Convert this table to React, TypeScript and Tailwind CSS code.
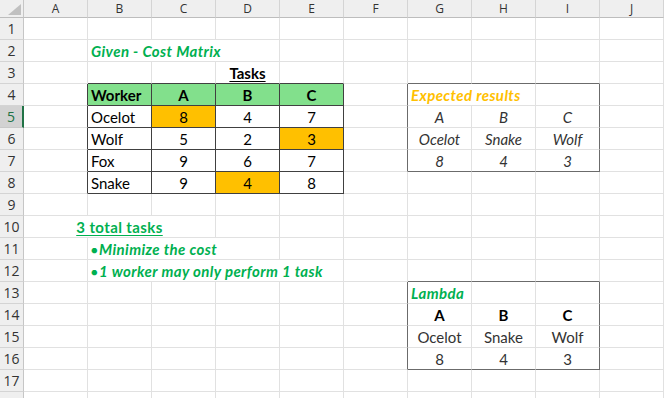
import React from "react";

type K = "g" | "t" | "x";
const W: Record<number, string> = { 1: "w-[64px]", 2: "w-[128px]", 3: "w-[192px]", 4: "w-[256px]" };
const R: Record<K, string> = { g: "border-r-[#e1e1e1]", t: "border-r-[#404040]", x: "border-r-[#6b6b6b]" };
const B: Record<K, string> = { g: "border-b-[#e1e1e1]", t: "border-b-[#404040]", x: "border-b-[#6b6b6b]" };

function Cell({
  w = 1,
  r = "g",
  b = "g",
  cls = "",
  children,
}: {
  w?: number;
  r?: K;
  b?: K;
  cls?: string;
  children?: React.ReactNode;
}) {
  return (
    <div
      className={`${W[w]} h-[22px] shrink-0 border-r border-b ${R[r]} ${B[b]} leading-[22px] whitespace-nowrap text-[15px] ${cls}`}
    >
      {children}
    </div>
  );
}

function RowHead({ n, sel = false, hide = false }: { n: number; sel?: boolean; hide?: boolean }) {
  return (
    <div
      className={`w-[24px] h-[22px] shrink-0 flex items-center justify-center border-b text-[14px] ${
        sel
          ? "bg-[#d2d2d2] text-[#217346] border-r-2 border-r-[#217346] border-b-[#c8c8c8]"
          : "bg-[#efefef] text-[#333333] border-r border-r-[#c6c6c6] border-b-[#d4d4d4]"
      }`}
      style={{ fontFamily: "'Open Sans', 'Noto Sans', sans-serif" }}
    >
      {hide ? "" : n}
    </div>
  );
}

function Row({ n, sel, hide, children }: { n: number; sel?: boolean; hide?: boolean; children?: React.ReactNode }) {
  return (
    <div className="flex h-[22px]">
      <RowHead n={n} sel={sel} hide={hide} />
      {children}
    </div>
  );
}

const G = "text-[#00b050] font-bold italic tracking-[0.4px]";

function Bullet() {
  return <span className="text-[11px] not-italic relative top-[-1px] mr-[1px]">●</span>;
}

export default function App() {
  const cols = ["A", "B", "C", "D", "E", "F", "G", "H", "I", "J"];
  const empty = (k: number, from = 0) =>
    Array.from({ length: k }, (_, i) => <Cell key={`e${from + i}`} />);

  return (
    <div
      className="w-[664px] h-[398px] overflow-hidden bg-white text-black"
      style={{ fontFamily: "Lato, Carlito, 'Liberation Sans', sans-serif" }}
    >
      {/* column header */}
      <div className="flex h-[18px]">
        <div className="relative w-[24px] h-[18px] shrink-0 bg-[#efefef] border-r border-b border-r-[#c6c6c6] border-b-[#bdbdbd]">
          <svg className="absolute left-0 top-0" width="24" height="18" viewBox="0 0 24 18">
            <polygon points="21,4 21,15 8,15" fill="#c0c0c0" />
          </svg>
        </div>
        {cols.map((c) => (
          <div
            key={c}
            className="w-[64px] h-[18px] shrink-0 bg-[#efefef] border-r border-b border-r-[#d4d4d4] border-b-[#bdbdbd] flex items-center justify-center text-[12px] text-[#333333]"
            style={{ fontFamily: "'Open Sans', 'Noto Sans', sans-serif" }}
          >
            {c}
          </div>
        ))}
      </div>

      <Row n={1}>{empty(10)}</Row>

      <Row n={2}>
        <Cell />
        <Cell w={3} cls={`${G} pl-[3px]`}>
          Given - Cost Matrix
        </Cell>
        {empty(6)}
      </Row>

      <Row n={3}>
        <Cell />
        <Cell b="t" />
        <Cell b="t" />
        <Cell b="t" cls="text-center font-bold">
          <span className="underline underline-offset-[2px]">Tasks</span>
        </Cell>
        <Cell b="t" />
        <Cell />
        <Cell b="x" />
        <Cell b="x" />
        <Cell b="x" />
        <Cell />
      </Row>

      <Row n={4}>
        <Cell r="t" />
        <Cell r="t" b="t" cls="bg-[#82e08c] font-bold pl-[3px]">
          Worker
        </Cell>
        <Cell r="t" b="t" cls="bg-[#82e08c] font-bold text-center">
          A
        </Cell>
        <Cell r="t" b="t" cls="bg-[#82e08c] font-bold text-center">
          B
        </Cell>
        <Cell r="t" b="t" cls="bg-[#82e08c] font-bold text-center">
          C
        </Cell>
        <Cell r="x" />
        <Cell w={2} cls="text-[#ffc000] font-bold italic tracking-[0.4px] pl-[3px]">
          Expected results
        </Cell>
        <Cell r="x" />
        <Cell />
      </Row>

      {[
        { n: 5, w: "Ocelot", v: ["8", "4", "7"], o: 0, e: ["A", "B", "C"] },
        { n: 6, w: "Wolf", v: ["5", "2", "3"], o: 2, e: ["Ocelot", "Snake", "Wolf"] },
        { n: 7, w: "Fox", v: ["9", "6", "7"], o: -1, e: ["8", "4", "3"] },
      ].map((row) => (
        <Row key={row.n} n={row.n} sel={row.n === 5}>
          <Cell r="t" />
          <Cell r="t" b="t" cls="pl-[3px]">
            {row.w}
          </Cell>
          {row.v.map((v, i) => (
            <Cell key={i} r="t" b="t" cls={`text-center ${row.o === i ? "bg-[#ffc000]" : ""}`}>
              {v}
            </Cell>
          ))}
          <Cell r="x" />
          {row.e.map((e, i) => (
            <Cell
              key={`x${i}`}
              r={i === 2 ? "x" : "g"}
              b={row.n === 7 ? "x" : "g"}
              cls="text-center italic text-[#333333]"
            >
              {e}
            </Cell>
          ))}
          <Cell />
        </Row>
      ))}

      <Row n={8}>
        <Cell r="t" />
        <Cell r="t" b="t" cls="pl-[3px]">
          Snake
        </Cell>
        <Cell r="t" b="t" cls="text-center">
          9
        </Cell>
        <Cell r="t" b="t" cls="text-center bg-[#ffc000]">
          4
        </Cell>
        <Cell r="t" b="t" cls="text-center">
          8
        </Cell>
        {empty(5)}
      </Row>

      <Row n={9}>{empty(10)}</Row>

      <Row n={10}>
        <Cell w={3} cls="text-[#00b050] font-bold tracking-[0.4px] text-center">
          <span className="underline underline-offset-[2px]">3 total tasks</span>
        </Cell>
        {empty(7)}
      </Row>

      <Row n={11}>
        <Cell />
        <Cell w={3} cls={`${G} pl-[3px]`}>
          <Bullet />
          Minimize the cost
        </Cell>
        {empty(6)}
      </Row>

      <Row n={12}>
        <Cell />
        <Cell w={4} cls={`${G} pl-[3px]`}>
          <Bullet />1 worker may only perform 1 task
        </Cell>
        <Cell />
        <Cell b="x" />
        <Cell b="x" />
        <Cell b="x" />
        <Cell />
      </Row>

      <Row n={13}>
        {empty(5)}
        <Cell r="x" />
        <Cell cls={`${G} pl-[3px]`}>Lambda</Cell>
        <Cell />
        <Cell r="x" />
        <Cell />
      </Row>

      {[
        { n: 14, e: ["A", "B", "C"], cls: "font-bold" },
        { n: 15, e: ["Ocelot", "Snake", "Wolf"], cls: "text-[#333333]" },
        { n: 16, e: ["8", "4", "3"], cls: "text-[#333333]" },
      ].map((row) => (
        <Row key={row.n} n={row.n}>
          {empty(5)}
          <Cell r="x" />
          {row.e.map((e, i) => (
            <Cell
              key={`l${i}`}
              r={i === 2 ? "x" : "g"}
              b={row.n === 16 ? "x" : "g"}
              cls={`text-center ${row.cls}`}
            >
              {e}
            </Cell>
          ))}
          <Cell />
        </Row>
      ))}

      <Row n={17}>{empty(10)}</Row>
      <Row n={18} hide>{empty(10)}</Row>
    </div>
  );
}
